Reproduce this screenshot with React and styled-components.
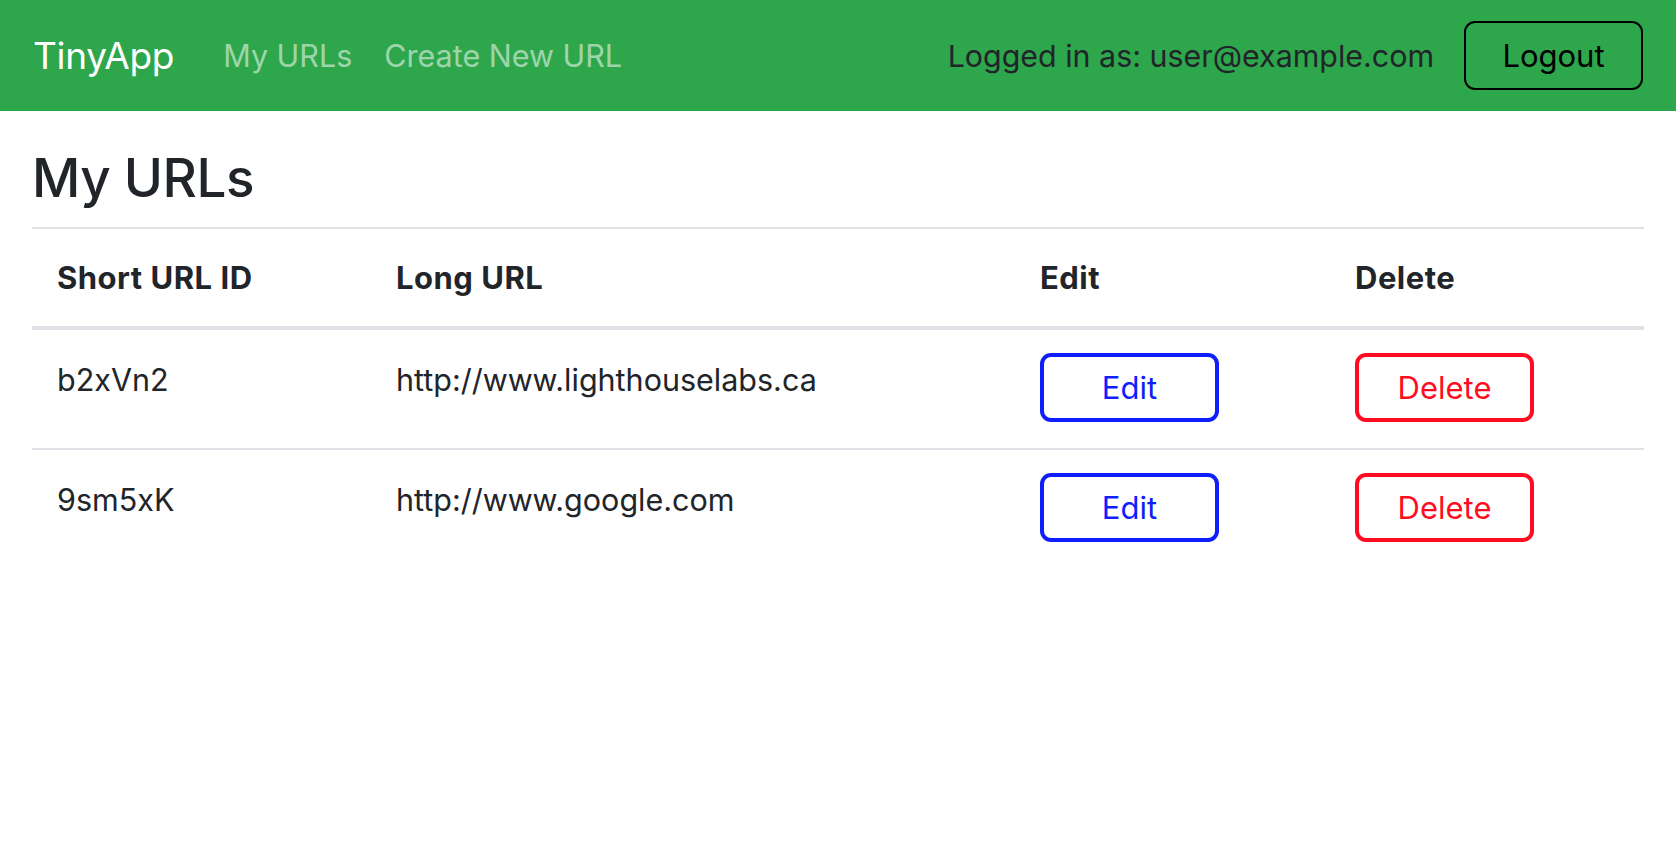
import React from 'react';
import styled, { createGlobalStyle } from 'styled-components';

const URLS = [
  { id: 'b2xVn2', longURL: 'http://www.lighthouselabs.ca' },
  { id: '9sm5xK', longURL: 'http://www.google.com' },
];

const GlobalStyle = createGlobalStyle`
  * {
    box-sizing: border-box;
  }
  body {
    margin: 0;
    background: #fff;
    color: #212529;
    font-family: Inter, "Liberation Sans", Arial, sans-serif;
  }
`;

const App = () => {
  return (
    <>
      <GlobalStyle />
      <Navbar>
        <Brand href="#">TinyApp</Brand>
        <NavLinks>
          <NavLink href="#">My URLs</NavLink>
          <NavLink href="#">Create New URL</NavLink>
        </NavLinks>
        <UserBox>
          <UserText>Logged in as: user@example.com</UserText>
          <LogoutBtn type="button">Logout</LogoutBtn>
        </UserBox>
      </Navbar>
      <Main>
        <Heading>My URLs</Heading>
        <Table>
          <colgroup>
            <col style={{ width: 339 }} />
            <col style={{ width: 644 }} />
            <col style={{ width: 315 }} />
            <col />
          </colgroup>
          <thead>
            <HeadRow>
              <HeadCell>Short URL ID</HeadCell>
              <HeadCell>Long URL</HeadCell>
              <HeadCell>Edit</HeadCell>
              <HeadCell>Delete</HeadCell>
            </HeadRow>
          </thead>
          <tbody>
            {URLS.map((url) => (
              <Row key={url.id}>
                <Cell>{url.id}</Cell>
                <Cell>{url.longURL}</Cell>
                <Cell>
                  <OutlineBtn type="button" color="#0f1eff">
                    Edit
                  </OutlineBtn>
                </Cell>
                <Cell>
                  <OutlineBtn type="button" color="#ff0c20">
                    Delete
                  </OutlineBtn>
                </Cell>
              </Row>
            ))}
          </tbody>
        </Table>
      </Main>
    </>
  );
};

const Navbar = styled.nav`
  height: 111px;
  background-color: #2ea64c;
  display: flex;
  align-items: center;
  padding: 0 33px;
`;

const Brand = styled.a`
  font-size: 37px;
  color: #fff;
  text-decoration: none;
  margin-right: 33px;
  letter-spacing: -0.3px;
`;

const NavLinks = styled.div`
  display: flex;
  align-items: center;
`;

const NavLink = styled.a`
  font-size: 30.5px;
  color: rgba(255, 255, 255, 0.55);
  text-decoration: none;
  padding: 0 16px;
`;

const UserBox = styled.div`
  margin-left: auto;
  display: flex;
  align-items: center;
  gap: 30px;
`;

const UserText = styled.span`
  font-size: 30.4px;
  color: #212529;
`;

const LogoutBtn = styled.button`
  width: 179px;
  height: 69px;
  border: 2px solid #000;
  border-radius: 11px;
  background: none;
  font-family: inherit;
  font-size: 31px;
  color: #000;
  cursor: pointer;
`;

const Main = styled.main`
  padding: 0 32px;
`;

const Heading = styled.h1`
  margin: 34px 0 15px;
  font-size: 53px;
  font-weight: 500;
  line-height: 67px;
  letter-spacing: -0.5px;
`;

const Table = styled.table`
  width: 100%;
  border-collapse: collapse;
  table-layout: fixed;
  border-top: 2px solid #dee2e6;
`;

const HeadRow = styled.tr`
  border-bottom: 4px solid #dee2e6;
`;

const HeadCell = styled.th`
  text-align: left;
  vertical-align: top;
  padding: 24px 24px 23px 25px;
  font-size: 31px;
  font-weight: 700;
  line-height: 50px;
  letter-spacing: 0.5px;
`;

const Row = styled.tr`
  border-bottom: 2px solid #dee2e6;
  &:last-child {
    border-bottom: none;
  }
`;

const Cell = styled.td`
  vertical-align: top;
  padding: 23px 24px 26px 25px;
  font-size: 30.5px;
  line-height: 54px;
`;

const OutlineBtn = styled.button`
  display: block;
  width: 179px;
  height: 69px;
  border: 4px solid ${(props) => props.color};
  border-radius: 11px;
  background: #fff;
  color: ${(props) => props.color};
  font-family: inherit;
  font-size: 31px;
  cursor: pointer;
`;

export default App;
